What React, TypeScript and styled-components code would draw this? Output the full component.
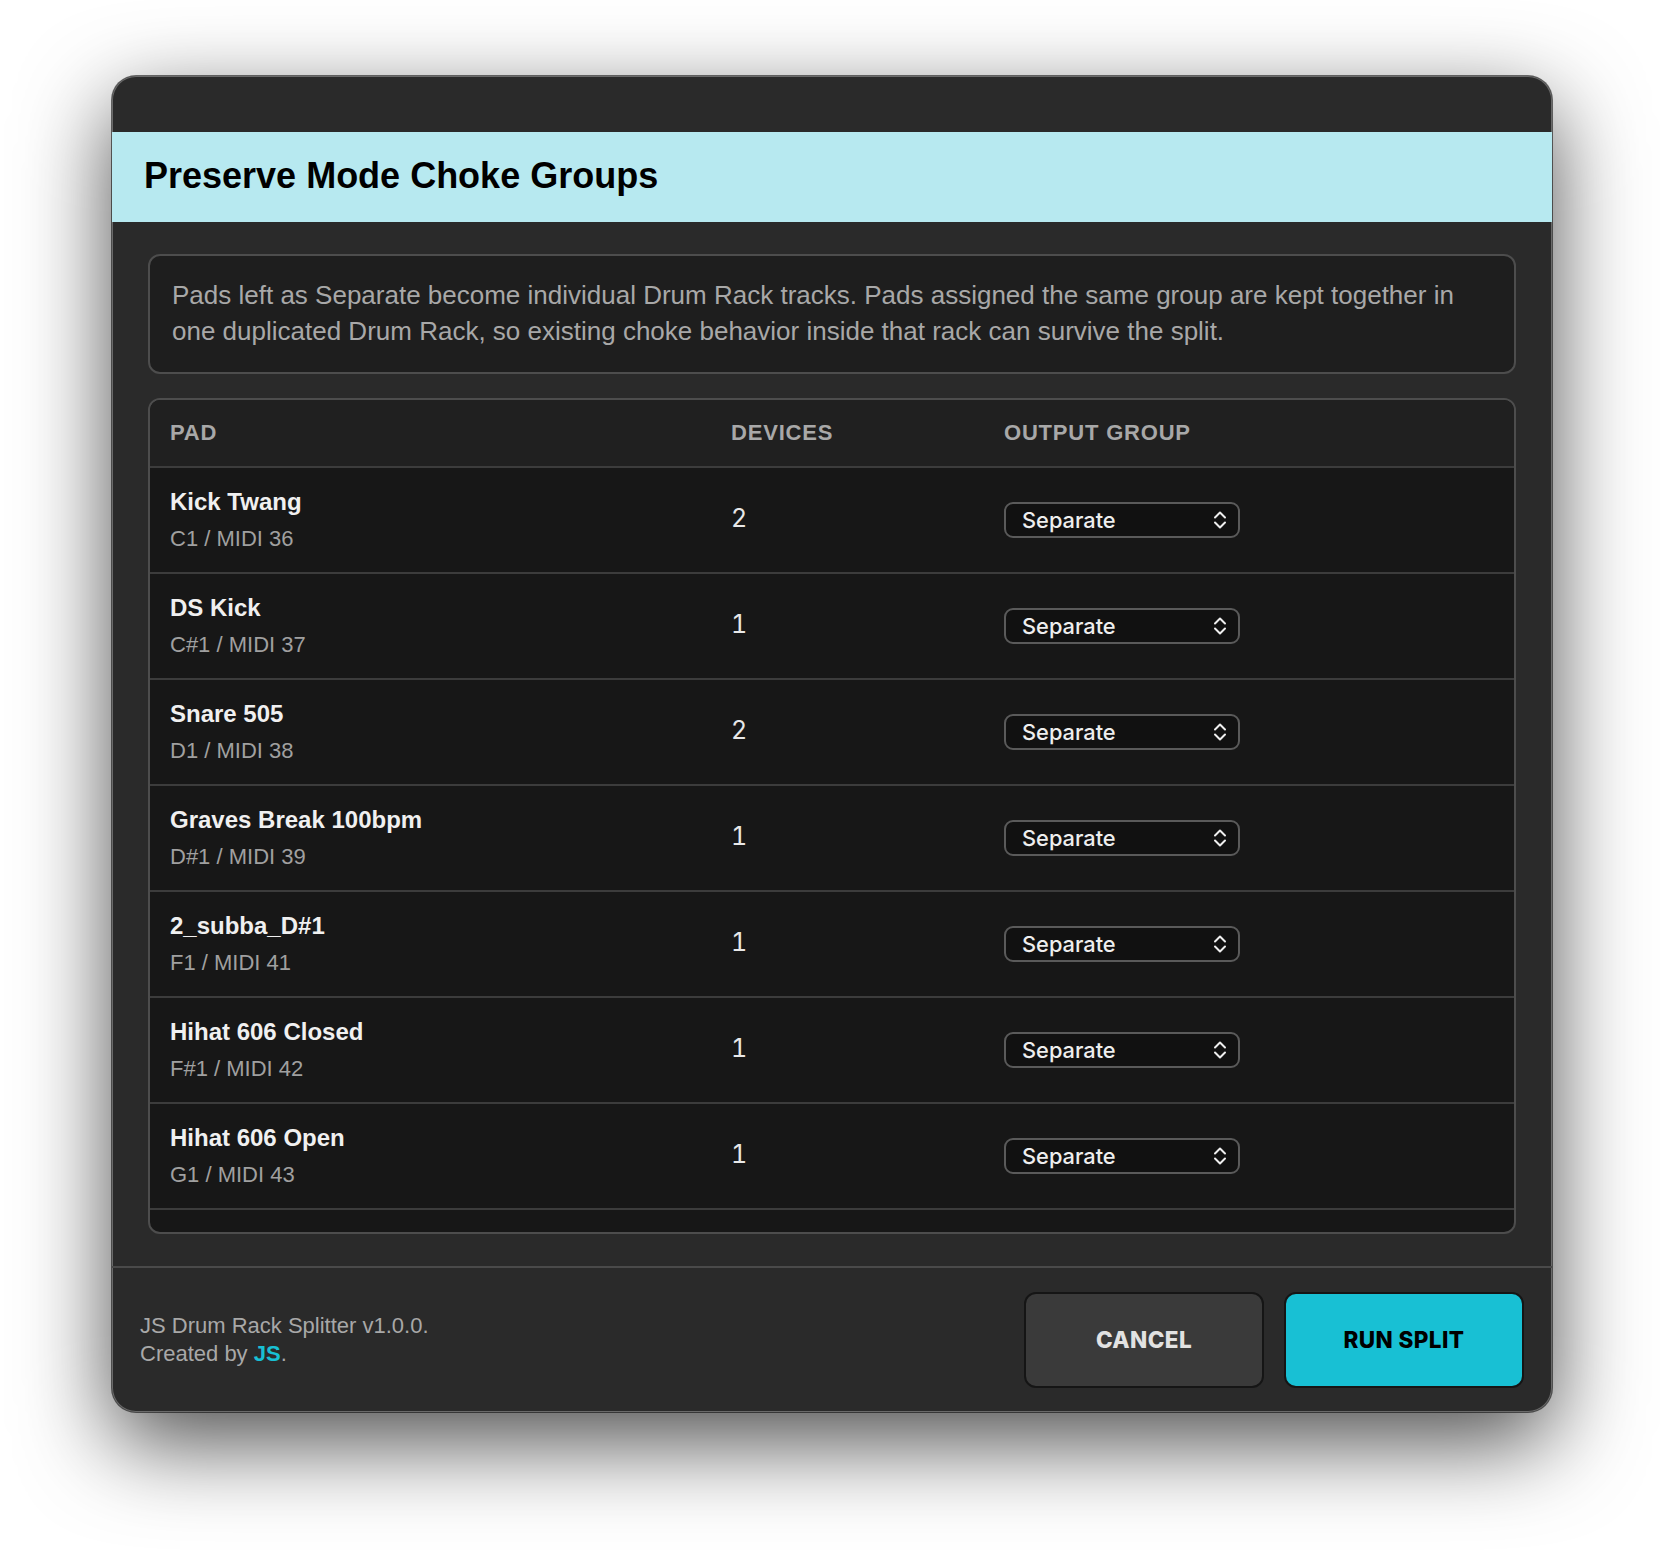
import styled, { createGlobalStyle } from "styled-components";

const GlobalStyle = createGlobalStyle`
  html, body {
    margin: 0;
    padding: 0;
    background: #ffffff;
  }
  body {
    width: 1664px;
    height: 1560px;
    overflow: hidden;
    font-family: "Liberation Sans", Arial, sans-serif;
  }
`;

const Page = styled.div`
  width: 1664px;
  height: 1560px;
  padding: 76px 112px 0;
  box-sizing: border-box;
`;

const Window = styled.div`
  height: 1336px;
  display: flex;
  flex-direction: column;
  box-sizing: border-box;
  background: #2a2a2a;
  border-radius: 24px;
  overflow: hidden;
  box-shadow: 0 0 0 1px #6a6a6a inset, 0 0 0 1px rgba(0, 0, 0, 0.55),
    0 30px 90px rgba(0, 0, 0, 0.7);
`;

const TitleBar = styled.div`
  height: 56px;
  flex: none;
`;

const Header = styled.header`
  height: 90px;
  flex: none;
  display: flex;
  align-items: center;
  padding: 0 32px;
  background: #b7e9f0;
`;

const Title = styled.h1`
  margin: 0 0 3px;
  font-size: 36px;
  font-weight: 700;
  color: #000000;
`;

const Body = styled.div`
  flex: 1;
  display: flex;
  flex-direction: column;
  gap: 24px;
  padding: 32px 36px 32px;
  border-bottom: 2px solid #4a4a4a;
`;

const Notice = styled.p`
  margin: 0;
  height: 120px;
  box-sizing: border-box;
  padding: 21px 22px;
  border: 2px solid #4d4d4d;
  border-radius: 12px;
  background: #1e1e1e;
  color: #a8a8a8;
  font-size: 26px;
  line-height: 36px;
`;

const Table = styled.div`
  flex: 1;
  border: 2px solid #4d4d4d;
  border-radius: 12px;
  overflow: hidden;
  background: #171717;
`;

const Cols = styled.div`
  display: grid;
  grid-template-columns: 561px 273px 1fr;
  padding-left: 20px;
  align-items: center;
`;

const HeadRow = styled(Cols)`
  height: 66px;
  background: #202020;
  border-bottom: 2px solid #3c3c3c;
`;

const HeadCell = styled.div`
  color: #a8a8a8;
  font-size: 22px;
  font-weight: 700;
  letter-spacing: 0.8px;
`;

const Row = styled(Cols)`
  height: 102px;
  padding-bottom: 2px;
  border-bottom: 2px solid #3c3c3c;
`;

const PadName = styled.div`
  color: #f0f0f0;
  font-size: 24px;
  font-weight: 700;
  line-height: 30px;
`;

const PadNote = styled.div`
  margin: 8px 0 -1px;
  color: #a0a0a0;
  font-size: 22px;
  line-height: 28px;
`;

const Count = styled.div`
  margin-bottom: 2px;
  color: #e8e8e8;
  font-family: Inter, sans-serif;
  font-size: 25px;
  font-variant-numeric: tabular-nums;
`;

const Select = styled.div`
  width: 236px;
  height: 36px;
  margin-top: 2px;
  box-sizing: border-box;
  display: flex;
  align-items: center;
  justify-content: space-between;
  padding: 0 10px 0 16px;
  border: 2px solid #5a5a5a;
  border-radius: 9px;
  background: #111111;
  color: #eeeeee;
  font-family: Inter, sans-serif;
  font-size: 21.8px;
  font-weight: 500;
`;

const Footer = styled.footer`
  flex: none;
  display: flex;
  align-items: center;
  justify-content: space-between;
  height: 144px;
  padding: 0 28px 0 28px;
`;

const Credit = styled.div`
  color: #a8a8a8;
  font-size: 22px;
  line-height: 28px;
`;

const CreditLink = styled.span`
  color: #18c0d4;
  font-weight: 700;
`;

const Actions = styled.div`
  display: flex;
  gap: 20px;
`;

const Button = styled.button<{ $primary?: boolean }>`
  width: 240px;
  height: 96px;
  padding: 0 0 2px;
  box-sizing: border-box;
  border: 2px solid #151515;
  border-radius: 12px;
  background: ${(p) => (p.$primary ? "#18c0d4" : "#3a3a3a")};
  color: ${(p) => (p.$primary ? "#000000" : "#e2e2e2")};
  font-family: Inter, sans-serif;
  font-size: 22.5px;
  font-weight: 800;
  letter-spacing: 0.4px;
`;

const pads = [
  { name: "Kick Twang", note: "C1 / MIDI 36", devices: 2 },
  { name: "DS Kick", note: "C#1 / MIDI 37", devices: 1 },
  { name: "Snare 505", note: "D1 / MIDI 38", devices: 2 },
  { name: "Graves Break 100bpm", note: "D#1 / MIDI 39", devices: 1 },
  { name: "2_subba_D#1", note: "F1 / MIDI 41", devices: 1 },
  { name: "Hihat 606 Closed", note: "F#1 / MIDI 42", devices: 1 },
  { name: "Hihat 606 Open", note: "G1 / MIDI 43", devices: 1 },
];

const Chevrons = () => (
  <svg width="16" height="20" viewBox="0 0 16 20" fill="none" stroke="#eeeeee" strokeWidth="2" strokeLinecap="round" strokeLinejoin="round">
    <path d="M3 7.5 8 2.5l5 5" />
    <path d="M3 12.5l5 5 5-5" />
  </svg>
);

const App = () => (
  <Page>
    <GlobalStyle />
    <Window>
      <TitleBar />
      <Header>
        <Title>Preserve Mode Choke Groups</Title>
      </Header>
      <Body>
        <Notice>
          Pads left as Separate become individual Drum Rack tracks. Pads assigned the same group are kept together in
          one duplicated Drum Rack, so existing choke behavior inside that rack can survive the split.
        </Notice>
        <Table>
          <HeadRow>
            <HeadCell>PAD</HeadCell>
            <HeadCell>DEVICES</HeadCell>
            <HeadCell>OUTPUT GROUP</HeadCell>
          </HeadRow>
          {pads.map((pad) => (
            <Row key={pad.name}>
              <div>
                <PadName>{pad.name}</PadName>
                <PadNote>{pad.note}</PadNote>
              </div>
              <Count>{pad.devices}</Count>
              <Select>
                Separate
                <Chevrons />
              </Select>
            </Row>
          ))}
        </Table>
      </Body>
      <Footer>
        <Credit>
          JS Drum Rack Splitter v1.0.0.
          <br />
          Created by <CreditLink>JS</CreditLink>.
        </Credit>
        <Actions>
          <Button>CANCEL</Button>
          <Button $primary>RUN SPLIT</Button>
        </Actions>
      </Footer>
    </Window>
  </Page>
);

export default App;
